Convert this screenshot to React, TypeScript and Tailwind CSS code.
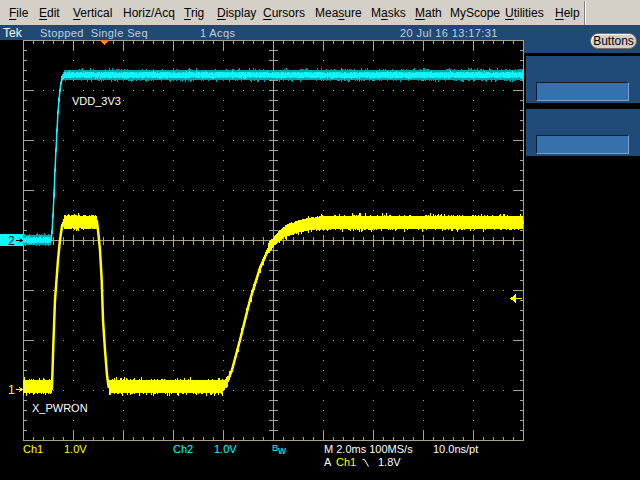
import React from "react";

type Pt = [number, number];

const GRID = "#a8a48c";

function makeRng(seed: number) {
  let s = seed >>> 0;
  return () => {
    s = (Math.imul(s, 1664525) + 1013904223) >>> 0;
    return s / 4294967296;
  };
}

function interp(pts: Pt[], x: number) {
  if (x <= pts[0][0]) return pts[0][1];
  for (let i = 1; i < pts.length; i++) {
    const [x1, y1] = pts[i];
    if (x <= x1) {
      const [x0, y0] = pts[i - 1];
      return y0 + ((y1 - y0) * (x - x0)) / (x1 - x0);
    }
  }
  return pts[pts.length - 1][1];
}

// page coords, converted to svg (y - 40) below
const yellowPts: Pt[] = [
  [23, 386.5], [52, 386.5], [53.5, 340], [55, 300], [58, 260], [60, 240], [62, 226], [64, 222],
  [97, 222], [98, 230], [100, 250], [101.7, 280], [103, 320], [105, 350], [107, 375], [108.5, 386.5],
  [223, 386.5], [228, 380], [232, 370], [240, 340], [250, 300], [260, 268], [268, 250], [275, 240],
  [285, 231], [300, 226], [320, 222.5], [524, 222.5],
].map(([x, y]) => [x, y - 40] as Pt);

const cyanPts: Pt[] = [
  [23, 240], [51, 240], [52, 232], [53, 215], [54, 195], [55, 170], [56, 150], [57, 130], [58, 112],
  [59, 100], [60, 90], [61, 83], [62, 78], [64, 75], [70, 75], [524, 75],
].map(([x, y]) => [x, y - 40] as Pt);

function band(pts: Pt[], half: number, seed: number, spike: number, edge: number) {
  const r = makeRng(seed);
  let d = "";
  for (let x = 23; x < 523; x++) {
    const y0 = interp(pts, x);
    const y1 = interp(pts, x + 1);
    const slope = Math.abs(y1 - y0);
    const h = slope > 3 ? edge : Math.max(edge, half * (1 - slope / 3));
    const a = r();
    const b = r();
    const nt = a > 0.86 ? 1 + r() * spike : a * 1.2;
    const nb = b > 0.82 ? 1 + r() * spike : b * 1.2;
    const top = Math.min(y0, y1) - h - nt;
    const bot = Math.max(y0, y1) + h + nb;
    d += `M${x} ${top.toFixed(1)}h1V${bot.toFixed(1)}h-1Z`;
  }
  return d;
}

function gridPaths() {
  let lines = "M23.5 0.5H523.5V400.5H23.5Z";
  for (let k = 1; k < 50; k++) {
    const x = 23 + 10 * k + 0.5;
    const len = k % 5 === 0 ? 10 : 4;
    lines += `M${x} 0V${len}M${x} 401V${401 - len}`;
    const t = k % 5 === 0 ? 6 : 4;
    lines += `M${x} ${200.5 - t}V${200.5 + t + 0.5}`;
  }
  for (let k = 1; k < 40; k++) {
    const y = 10 * k + 0.5;
    const len = k % 5 === 0 ? 10 : 4;
    lines += `M23 ${y}H${23 + len}M524 ${y}H${524 - len}`;
    lines += `M269 ${y}H278`;
  }
  lines += "M23 200.5H524M273.5 0V401";
  let dots = "";
  for (const gx of [73, 123, 173, 223, 323, 373, 423, 473]) {
    for (let y = 10; y < 400; y += 10) {
      if (y % 50 === 0) continue;
      dots += `M${gx} ${y}h1v1h-1Z`;
    }
  }
  for (const gy of [50, 100, 150, 250, 300, 350]) {
    for (let x = 33; x < 523; x += 10) {
      if ((x - 23) % 50 === 0) continue;
      dots += `M${x} ${gy}h1v1h-1Z`;
    }
  }
  return { lines, dots };
}

const grid = gridPaths();
const yellowBand = band(yellowPts, 6.2, 7, 2.5, 1.4);
const cyanOuter = band(cyanPts, 4.6, 19, 1.5, 0.8);
const cyanInner = band(cyanPts, 2.2, 31, 0.6, 0.5);
const yellowLine = yellowPts.map(([x, y], i) => `${i ? "L" : "M"}${x} ${y}`).join("");
const cyanLine = cyanPts.map(([x, y], i) => `${i ? "L" : "M"}${x} ${y}`).join("");

function Scope() {
  return (
    <svg width={524} height={401} className="block" shapeRendering="crispEdges">
      <path d={grid.dots} fill="#9c9c9c" />
      <path d={grid.lines} stroke={GRID} strokeWidth={1} fill="none" />
      <path d={yellowBand} fill="#ffff00" />
      <path d={yellowLine} stroke="#ffff00" strokeWidth={2.5} fill="none" shapeRendering="auto" />
      <path d={cyanOuter} fill="#00a6ae" />
      <path d={cyanLine} stroke="#20e8f0" strokeWidth={1.5} fill="none" shapeRendering="auto" />
      <path d={cyanInner} fill="#10f4f8" />
      {/* trigger position marker */}
      <polygon points="100,0 109,0 104.5,5" fill="#ff7f27" />
      {/* ch2 ground marker */}
      <rect x={0} y={194} width={23} height={12} fill="#00ffff" />
      <text x={8} y={205} fontSize={12} fill="#000" fontFamily="Liberation Sans, sans-serif">2</text>
      <path d="M16 200.5H22M19 198L22 200.5L19 203" stroke="#000" strokeWidth={1} fill="none" />
      {/* ch1 ground marker */}
      <text x={8} y={354} fontSize={12} fill="#ffff00" fontFamily="Liberation Sans, sans-serif">1</text>
      <path d="M16 349.5H22M19 347L22 349.5L19 352" stroke="#ffff00" strokeWidth={1} fill="none" />
      {/* trigger level marker */}
      <path d="M515 258.5H522" stroke="#ffff00" strokeWidth={1.5} />
      <polygon points="510,258.5 516,254 516,263" fill="#ffff00" />
      <text x={72} y={65} fontSize={11} fill="#fff" fontFamily="Liberation Sans, sans-serif">VDD_3V3</text>
      <text x={32} y={372} fontSize={11} fill="#fff" fontFamily="Liberation Sans, sans-serif">X_PWRON</text>
    </svg>
  );
}

const menu = [
  { label: "File", u: 0, w: "w-[30px]" },
  { label: "Edit", u: 0, w: "w-[34px]" },
  { label: "Vertical", u: 0, w: "w-[50px]" },
  { label: "Horiz/Acq", u: -1, w: "w-[61px]" },
  { label: "Trig", u: 0, w: "w-[33px]" },
  { label: "Display", u: 0, w: "w-[46px]" },
  { label: "Cursors", u: 0, w: "w-[52px]" },
  { label: "Measure", u: 3, w: "w-[56px]" },
  { label: "Masks", u: 1, w: "w-[44px]" },
  { label: "Math", u: 0, w: "w-[35px]" },
  { label: "MyScope", u: -1, w: "w-[55px]" },
  { label: "Utilities", u: 0, w: "w-[50px]" },
  { label: "Help", u: 0, w: "w-[29px]" },
];

function MenuBar() {
  return (
    <div className="flex h-[26px] items-center border-b border-[#404040] bg-[#d4d0c8] pl-[9px] text-[12px] text-black">
      {menu.map((m) => (
        <span key={m.label} className={`${m.w} shrink-0 whitespace-nowrap`}>
          {m.u < 0 ? (
            m.label
          ) : (
            <>
              {m.label.slice(0, m.u)}
              <span className="underline underline-offset-2">{m.label[m.u]}</span>
              {m.label.slice(m.u + 1)}
            </>
          )}
        </span>
      ))}
      <span className="h-[24px] w-[2px] border-l border-r border-l-[#808080] border-r-white" />
    </div>
  );
}

function Readouts() {
  return (
    <div className="flex h-[39px] flex-col pt-[3px] text-[11px] leading-[11px]">
      <div className="flex pl-[23px]">
        <span className="w-[41px] text-[#ffff00]">Ch1</span>
        <span className="w-[109px] text-[#ffff00]">1.0V</span>
        <span className="w-[41px] text-[#00ffff]">Ch2</span>
        <span className="w-[58px] text-[#00ffff]">1.0V</span>
        <span className="flex w-[52px] items-start text-[#00ffff]">
          <span className="text-[9px] leading-[9px]">B</span>
          <span className="mt-[1px]">w</span>
        </span>
        <span className="w-[109px] text-white">M 2.0ms 100MS/s</span>
        <span className="text-white">10.0ns/pt</span>
      </div>
      <div className="mt-[1px] flex items-center pl-[324px] text-white">
        <span className="w-[12px]">A</span>
        <span className="w-[26px] text-[#ffff00]">Ch1</span>
        <svg width={16} height={10} className="block">
          <path d="M0.5 1.5H2.5L6.5 8.5" stroke="#fff" strokeWidth={1} fill="none" />
        </svg>
        <span>1.8V</span>
      </div>
    </div>
  );
}

function SidePanel() {
  return (
    <div className="ml-[2px] h-[47px] bg-[#204b79] pl-[10px] pt-[26px]">
      <div className="h-[19px] w-[93px] border-b border-l border-r border-t border-b-[#7fa3c8] border-l-[#0d1d33] border-r-[#7fa3c8] border-t-[#0d1d33] bg-[#3571ac]" />
    </div>
  );
}

export default function App() {
  return (
    <div className="flex h-[480px] w-[640px] flex-col overflow-hidden bg-black font-['Liberation_Sans',Arial,sans-serif]">
      <MenuBar />
      <div className="flex">
        <div className="flex w-[524px] flex-col">
          <div className="flex h-[14px] items-center bg-[#1f4a76] pl-[3px] text-[11px] leading-none text-[#c6cedb]">
            <span className="w-[37px] text-[12px] text-white">Tek</span>
            <span className="w-[160px] tracking-[0.4px] whitespace-pre">Stopped  Single Seq</span>
            <span className="w-[200px] tracking-[0.4px]">1 Acqs</span>
            <span className="tracking-[0.4px]">20 Jul 16 13:17:31</span>
          </div>
          <Scope />
          <Readouts />
        </div>
        <div className="flex w-[116px] flex-col">
          <div className="flex h-[27px] justify-end bg-[#1f4a76] pr-[3px] pt-[7px]">
            <div className="flex h-[16px] w-[47px] items-center justify-center rounded-full border border-[#6e6e6e] bg-[#d4d0c8] text-[12px] leading-none text-black shadow-[inset_1px_1px_0_#ffffff]">
              Buttons
            </div>
          </div>
          <div className="mt-[3px]">
            <SidePanel />
          </div>
          <div className="mt-[6px]">
            <SidePanel />
          </div>
        </div>
      </div>
    </div>
  );
}
